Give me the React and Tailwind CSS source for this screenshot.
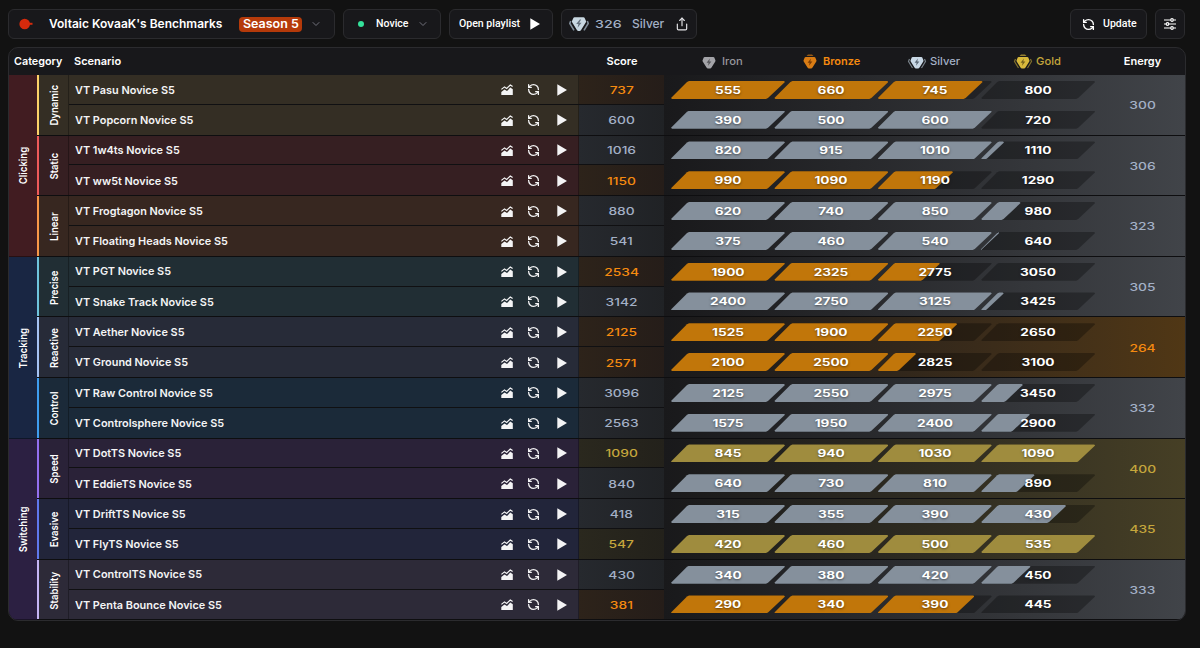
import React from 'react';
import { LuRefreshCcw, LuChevronDown, LuShare } from 'react-icons/lu';

const groups = [
  {
    name: 'Clicking', bg: 'bg-[#411c21]', rows: [
      { name: 'Dynamic', bg: 'bg-[#342e24]', line: 'bg-[#fcd268]', energy: 300, rank: 'silver', items: [
        ['VT Pasu Novice S5', 737, [555, 660, 745, 800]],
        ['VT Popcorn Novice S5', 600, [390, 500, 600, 720]]] },
      { name: 'Static', bg: 'bg-[#361f22]', line: 'bg-[#ef5a5a]', energy: 306, rank: 'silver', items: [
        ['VT 1w4ts Novice S5', 1016, [820, 915, 1010, 1110]],
        ['VT ww5t Novice S5', 1150, [990, 1090, 1190, 1290]]] },
      { name: 'Linear', bg: 'bg-[#372720]', line: 'bg-[#f99848]', energy: 323, rank: 'silver', items: [
        ['VT Frogtagon Novice S5', 880, [620, 740, 850, 980]],
        ['VT Floating Heads Novice S5', 541, [375, 460, 540, 640]]] },
    ],
  },
  {
    name: 'Tracking', bg: 'bg-[#192643]', rows: [
      { name: 'Precise', bg: 'bg-[#212e34]', line: 'bg-[#6fc4dd]', energy: 305, rank: 'silver', items: [
        ['VT PGT Novice S5', 2534, [1900, 2325, 2775, 3050]],
        ['VT Snake Track Novice S5', 3142, [2400, 2750, 3125, 3425]]] },
      { name: 'Reactive', bg: 'bg-[#272b38]', line: 'bg-[#a5c3f5]', energy: 264, rank: 'bronze', items: [
        ['VT Aether Novice S5', 2125, [1525, 1900, 2250, 2650]],
        ['VT Ground Novice S5', 2571, [2100, 2500, 2825, 3100]]] },
      { name: 'Control', bg: 'bg-[#1b2a39]', line: 'bg-[#3f9df0]', energy: 332, rank: 'silver', items: [
        ['VT Raw Control Novice S5', 3096, [2125, 2550, 2975, 3450]],
        ['VT Controlsphere Novice S5', 2563, [1575, 1950, 2400, 2900]]] },
    ],
  },
  {
    name: 'Switching', bg: 'bg-[#2c2042]', rows: [
      { name: 'Speed', bg: 'bg-[#2a2238]', line: 'bg-[#9470f0]', energy: 400, rank: 'gold', items: [
        ['VT DotTS Novice S5', 1090, [845, 940, 1030, 1090]],
        ['VT EddieTS Novice S5', 840, [640, 730, 810, 890]]] },
      { name: 'Evasive', bg: 'bg-[#22253a]', line: 'bg-[#6078ee]', energy: 435, rank: 'gold', items: [
        ['VT DriftTS Novice S5', 418, [315, 355, 390, 430]],
        ['VT FlyTS Novice S5', 547, [420, 460, 500, 535]]] },
      { name: 'Stability', bg: 'bg-[#2d2a38]', line: 'bg-[#c5b5f5]', energy: 333, rank: 'silver', items: [
        ['VT ControlTS Novice S5', 430, [340, 380, 420, 450]],
        ['VT Penta Bounce Novice S5', 381, [290, 340, 390, 445]]] },
    ],
  },
];

const styles = {
  bronze: { fill: 'bg-[#c1760a]', text: 'text-[#f58a10]', score: 'from-[#2d231a] to-[#251d19]', energy: 'to-[#503715]' },
  silver: { fill: 'bg-[#85909c]', text: 'text-[#a3b0c6]', score: 'from-[#26292e] to-[#202225]', energy: 'to-[#414449]' },
  gold: { fill: 'bg-[#9f8c3e]', text: 'text-[#c5a63c]', score: 'from-[#2a281e] to-[#23211b]', energy: 'to-[#463f25]' },
};

const rankOf = (score, limits) => {
  if (score >= limits[3]) return 'gold';
  if (score >= limits[2]) return 'silver';
  return 'bronze';
};

const SLANT = 17;
const BAR = 114;

const Segment = ({ score, from, to, fill }) => {
  const part = Math.min(1, Math.max(0, (score - from) / (to - from)));
  const shape = '[clip-path:polygon(18px_0,calc(100%_-_1px)_0,100%_1px,calc(100%_-_17px)_calc(100%_-_1px),calc(100%_-_19px)_100%,1px_100%,0_calc(100%_-_1px),16px_1px)]';
  return (
    <div className="w-[103.4px] shrink-0">
      <div className="grid h-[18px] w-[114px]">
        <div className={`col-start-1 row-start-1 bg-black/30 ${shape}`} />
        {part > 0 && (
          <div
            className={`col-start-1 row-start-1 ${fill} ${shape}`}
            style={{ width: SLANT + (BAR - SLANT) * part }}
          />
        )}
        <span className="z-10 col-start-1 row-start-1 flex scale-x-[1.36] items-center justify-center pt-px text-[10px] font-bold text-white [text-shadow:0_1px_2px_rgba(0,0,0,0.5)]">
          {to}
        </span>
      </div>
    </div>
  );
};

const PlayIcon = ({ className }) => (
  <svg viewBox="0 0 10 12" className={className} fill="currentColor">
    <path d="M0.3 0.3 10 6 0.3 11.7z" />
  </svg>
);

const ChartIcon = ({ className }) => (
  <svg viewBox="0 0 12 11" className={className}>
    <path d="M.4 5.400 3.500 2.900 5.700 4.400 9.300 1 11.600 2.600" fill="none" stroke="currentColor" strokeWidth="1.200" />
    <path d="M.3 11V8l3.200-2.600L6 7.100l3.300-3.500 2.500 1.700V11z" fill="currentColor" />
  </svg>
);

const Badge = ({ level, color, dark, className }) => (
  <svg viewBox="0 0 20 16" className={className}>
    {(level === 'bronze' || level === 'gold') && <path d="M6.500 2.100 8 .6h4l1.500 1.500z" fill={color} opacity="0.65" />}
    <path d="M5.700 3h8.600c.5 0 .8.200 1 .6l1.100 2.600c.2.400.1.800-.1 1.200l-3.800 6.100c-.4.700-.8 1-1.500 1H9c-.7 0-1.100-.3-1.500-1L3.700 7.400c-.2-.4-.3-.8-.1-1.200l1.100-2.600c.2-.4.500-.6 1-.6z" fill={color} />
    <path d="M10.900 4.500 7.600 8.700h2l-.6 3 3.400-4.200h-2.100z" fill={dark} />
    {(level === 'silver' || level === 'gold') && (
      <path d="M2.500 5 1.500 7.500 5.500 14M17.500 5l1 2.500-4 6.500" fill="none" stroke={color} strokeWidth="1.200" opacity="0.55" />
    )}
  </svg>
);

// Wide variant used next to the overall rank
const OverallBadge = () => (
  <svg viewBox="0 0 20 16" className="h-4 w-5 shrink-0">
    <path d="M5.500 1.200h9c.5 0 .8.200 1 .6l1.500 3.200c.2.400.1.800-.1 1.200l-4.800 7.800c-.4.600-.9.900-1.500.9H9.400c-.6 0-1.100-.3-1.500-.9L3.100 6.200c-.2-.4-.3-.8-.1-1.200l1.500-3.200c.2-.4.500-.6 1-.6z" fill="#c9d8e2" />
    <path d="M10.800 3.500 7.200 8h2.200l-.8 3.700 3.900-5h-2.300l2-3.200z" fill="#66727f" />
    <path d="M1.700 5 .8 7.500 5 14.300M18.300 5l.9 2.500-4.200 6.800" fill="none" stroke="#7f8b97" strokeWidth="1.600" />
  </svg>
);

const SlidersIcon = () => (
  <svg viewBox="0 0 12 12" className="size-3" fill="none" stroke="currentColor" strokeWidth="1.2">
    <path d="M0 2h6.500M9.500 2H12M0 6h2M5 6h7M0 10h6.500M9.500 10H12" />
    <circle cx="8" cy="2" r="1.300" />
    <circle cx="3.500" cy="6" r="1.300" />
    <circle cx="8" cy="10" r="1.300" />
  </svg>
);

const HeaderRank = ({ level, label, color, dark, text }) => (
  <div className={`flex w-[103.4px] items-center justify-center gap-[3px] ${text} ${level === 'iron' ? 'pr-[12px]' : ''}`}>
    <Badge level={level} color={color} dark={dark} className="h-4 w-5 shrink-0" />
    <span className={level === 'bronze' ? 'font-semibold' : 'origin-left scale-x-[1.02]'}>{label}</span>
  </div>
);

const box = 'flex items-center rounded-md border border-[#2b2b2e] bg-[#18181b]';

const Toolbar = () => (
  <div className="flex h-[30px] items-center text-white">
    <div className={`${box} h-[30px] w-[327px] pl-[10px]`}>
      <svg viewBox="0 0 14 12" className="h-3 w-3.5 shrink-0 text-[#d42a0c]" fill="currentColor">
        <circle cx="5.700" cy="6" r="5.300" />
        <path d="M10 4.800h3.500v2H10z" />
      </svg>
      <span className="ml-4 w-[190px] shrink-0 text-[12px] font-semibold whitespace-nowrap">
        <span className="inline-block origin-left">Voltaic KovaaK's Benchmarks</span>
      </span>
      <span className="flex h-[15px] w-[63px] shrink-0 items-center justify-center rounded-sm bg-[#b53a0a] text-[12px] font-semibold whitespace-nowrap">
        <span className="scale-x-[1.04]">Season 5</span>
      </span>
      <LuChevronDown className="ml-2 size-3 shrink-0 text-zinc-500" />
    </div>
    <div className={`${box} ml-[8px] h-[30px] w-[98px] pl-[14px] font-['Roboto',sans-serif] text-[11px] font-medium`}>
      <span className="size-1.5 shrink-0 rounded-full bg-[#34e29b]" />
      <span className="ml-3 w-[33px] shrink-0 whitespace-nowrap"><span className="inline-block scale-x-[0.96] origin-left">Novice</span></span>
      <LuChevronDown className="ml-2 size-3 shrink-0 text-zinc-500" />
    </div>
    <div className={`${box} ml-[8px] h-[30px] w-[104px] pl-[9px] font-['Roboto',sans-serif] text-[11px] font-medium`}>
      <span className="w-[71px] shrink-0 whitespace-nowrap"><span className="inline-block scale-x-[0.96] origin-left">Open playlist</span></span>
      <PlayIcon className="h-3 w-2.5 shrink-0" />
    </div>
    <div className={`${box} ml-[8px] h-[30px] w-[136px] pl-[7px] text-[12px] font-medium text-[#a3b0c6]`}>
      <OverallBadge />
      <span className="ml-1.5 w-[37px] shrink-0 text-[11px]"><span className="inline-block origin-left scale-x-[1.29]">326</span></span>
      <span className="w-[43px] shrink-0"><span className="inline-block origin-left">Silver</span></span>
      <LuShare className="size-3.5 shrink-0 text-zinc-200" />
    </div>
    <div className={`${box} ml-auto h-[30px] w-[77px] pl-[11px] font-['Roboto',sans-serif] text-[11px] font-medium`}>
      <LuRefreshCcw className="size-[13px] shrink-0" strokeWidth={2.5} />
      <span className="ml-2 origin-left scale-x-[0.96]">Update</span>
    </div>
    <div className={`${box} ml-[8px] mr-px h-[30px] w-[30px] justify-center`}>
      <SlidersIcon />
    </div>
  </div>
);

const App = () => {
  return (
    <div className="h-[648px] w-[1200px] overflow-hidden bg-[#121212] pt-[9px] pr-[14px] pl-[8px] font-['Inter',sans-serif] text-[11px]">
      <Toolbar />

      <div className="mt-[8px] overflow-hidden rounded-[10px] border border-[#2b2b2e] bg-[#18181b]">
        {/* Column titles */}
        <div className="flex h-[27px] items-center font-semibold text-white">
          <div className="w-[60px] pl-[5px]"><span className="inline-block origin-left scale-x-[0.98]">Category</span></div>
          <div className="w-[510px] pl-[5px]"><span className="inline-block origin-left">Scenario</span></div>
          <div className="w-[86px] text-center">Score</div>
          <div className="flex flex-1 pl-[10px] font-medium">
            <HeaderRank level="iron" label="Iron" color="#a3a3a8" dark="#55555a" text="text-[#96969c]" />
            <HeaderRank level="bronze" label="Bronze" color="#d97c14" dark="#7c3d05" text="text-[#f58a10]" />
            <HeaderRank level="silver" label="Silver" color="#c9d8e6" dark="#5c6875" text="text-[#a3b0c6]" />
            <HeaderRank level="gold" label="Gold" color="#d8b93c" dark="#75621b" text="text-[#c5a63c]" />
          </div>
          <div className="w-[85px] text-center">Energy</div>
        </div>

        {groups.map((group) => (
          <div key={group.name} className="flex h-[181.8px]">
            <div className={`flex w-[28px] items-center justify-center border-b border-black/40 pt-px ${group.bg}`}>
              <span className="scale-y-[0.87] rotate-180 font-semibold text-white [writing-mode:vertical-rl]">{group.name}</span>
            </div>
            <div className="flex-1">
              {group.rows.map((row) => (
                <div key={row.name} className="flex h-[60.6px] border-b border-black/40">
                  <div className={`w-[2px] ${row.line}`} />
                  <div className={`flex w-[30px] items-center justify-center border-r border-black/30 pt-[2px] pl-px ${row.bg}`}>
                    <span className="scale-y-[0.87] rotate-180 font-semibold text-white [writing-mode:vertical-rl]">{row.name}</span>
                  </div>
                  <div className="w-[595px]">
                    {row.items.map(([name, score, limits], i) => {
                      const s = styles[rankOf(score, limits)];
                      return (
                        <div key={name} className={`flex h-1/2 ${i === 0 ? 'border-b border-black/30' : ''}`}>
                          <div className={`flex w-[510px] items-center border-r border-black/30 pt-px pr-[11px] pl-[6px] text-zinc-100 ${row.bg}`}>
                            <span className="origin-left scale-x-[0.99] font-semibold">{name}</span>
                            <ChartIcon className="ml-auto h-[11px] w-3" />
                            <LuRefreshCcw className="ml-[14px] size-[13px]" strokeWidth={2.4} />
                            <PlayIcon className="ml-[17px] h-3 w-2.5" />
                          </div>
                          <div className={`flex w-[85px] items-center justify-center bg-linear-to-r pt-[2px] text-[10px] font-medium ${s.score} ${s.text}`}>
                            <span className="scale-x-[1.38]">{score}</span>
                          </div>
                        </div>
                      );
                    })}
                  </div>
                  <div className={`flex flex-1 bg-linear-to-r from-[#19191b] ${styles[row.rank].energy}`}>
                    <div className="flex-1 pl-[7px]">
                      {row.items.map(([name, score, limits]) => (
                        <div key={name} className="flex h-1/2 items-center">
                          {limits.map((limit, i) => (
                            <Segment
                              key={limit}
                              score={score}
                              from={i === 0 ? 0 : limits[i - 1]}
                              to={limit}
                              fill={styles[rankOf(score, limits)].fill}
                            />
                          ))}
                        </div>
                      ))}
                    </div>
                    <div className={`flex w-[85px] items-center justify-center pt-[2px] text-[10px] font-medium ${styles[row.rank].text}`}>
                      <span className="scale-x-[1.38]">{row.energy}</span>
                    </div>
                  </div>
                </div>
              ))}
            </div>
          </div>
        ))}
      </div>
    </div>
  );
};

export default App;
